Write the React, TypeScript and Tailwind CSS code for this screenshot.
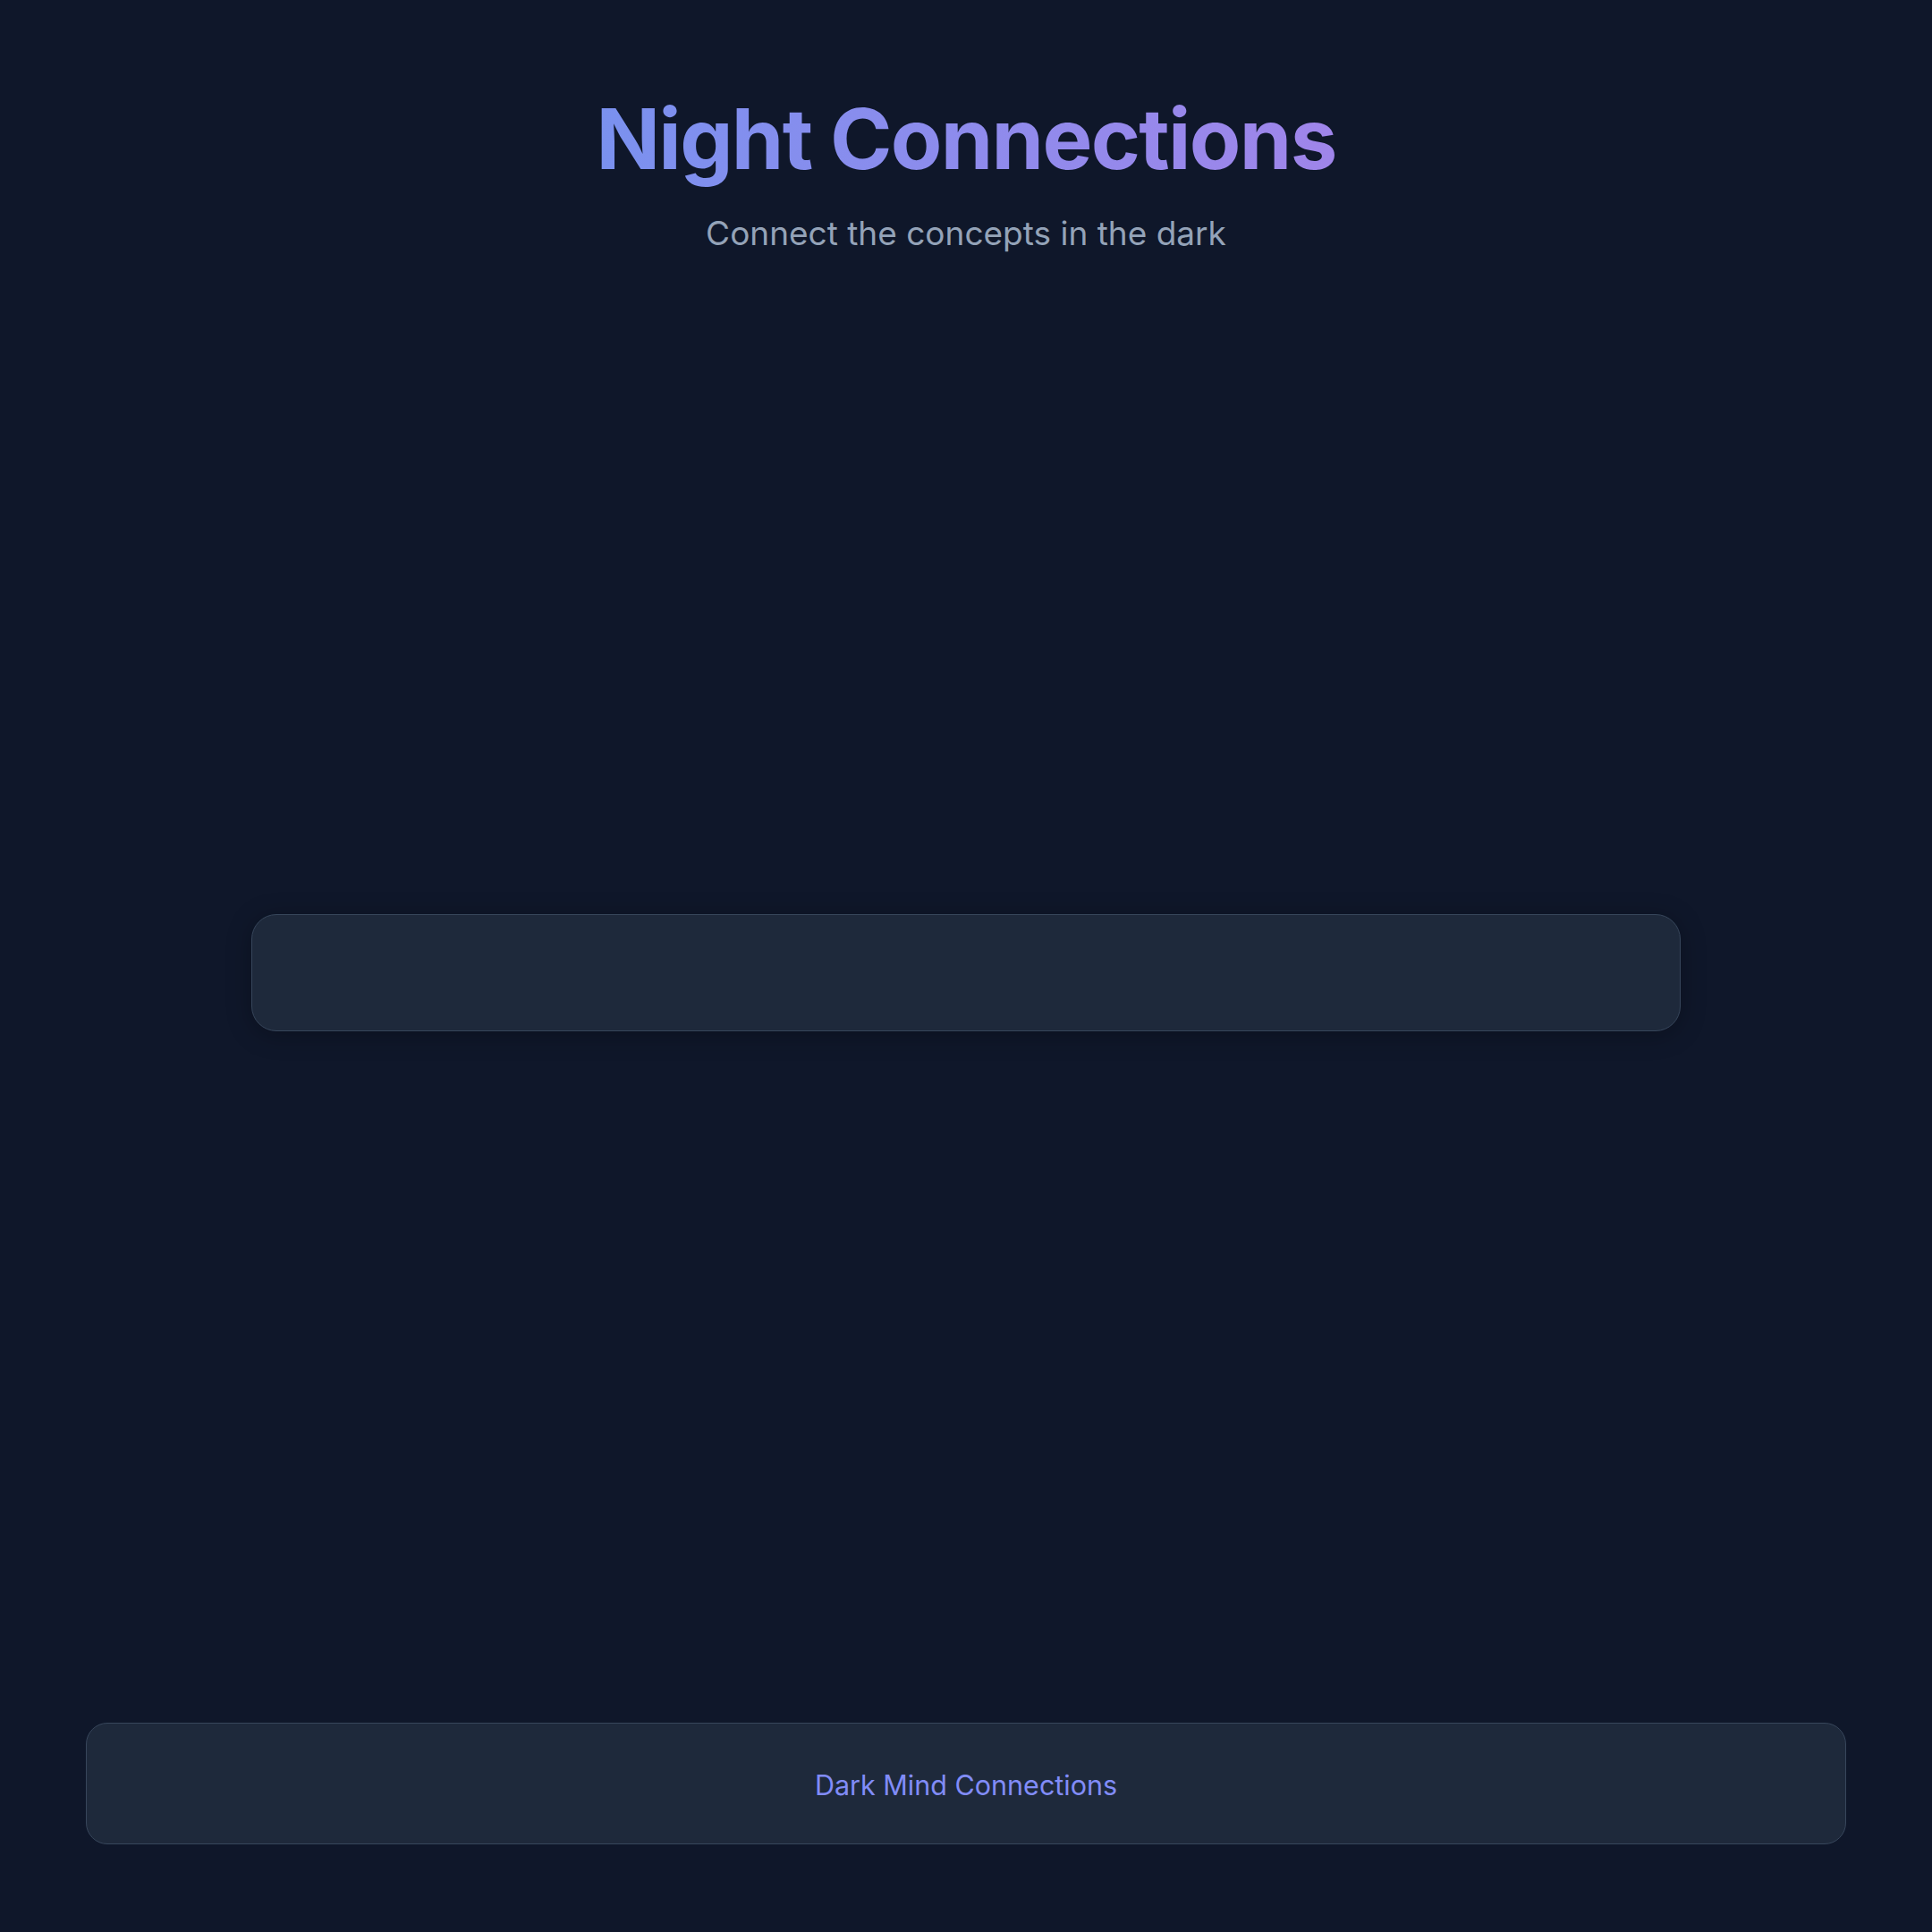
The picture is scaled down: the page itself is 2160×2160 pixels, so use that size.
export default function App() {
  return (
    <div className="flex min-h-screen flex-col bg-[#0f172a] px-[96px] pb-[98px] pt-[99px] font-['Inter',sans-serif]">
      <header className="flex flex-col items-center text-center">
        <h1 className="inline-block bg-gradient-to-r from-[#7a91ef] to-[#9f85ea] bg-clip-text text-[94px] font-bold leading-[1.2] tracking-[-0.018em] text-transparent">
          Night Connections
        </h1>
        <p className="mt-[22px] text-[37px] leading-[54px] text-[#94a3b8]">
          Connect the concepts in the dark
        </p>
      </header>

      <main className="flex flex-1 items-center justify-center pb-[38px]">
        <div className="h-[131px] w-full max-w-[1598px] rounded-[28px] border border-[#37465b] bg-[#1e293b] shadow-[0_4px_28px_rgba(0,0,0,0.28)]" />
      </main>

      <footer className="flex h-[136px] items-center justify-center rounded-3xl border border-[#37465b] bg-[#1e293b] pt-[3px]">
        <span className="text-[30.5px] leading-[38px] text-[#818cf8]">
          Dark Mind Connections
        </span>
      </footer>
    </div>
  );
}
